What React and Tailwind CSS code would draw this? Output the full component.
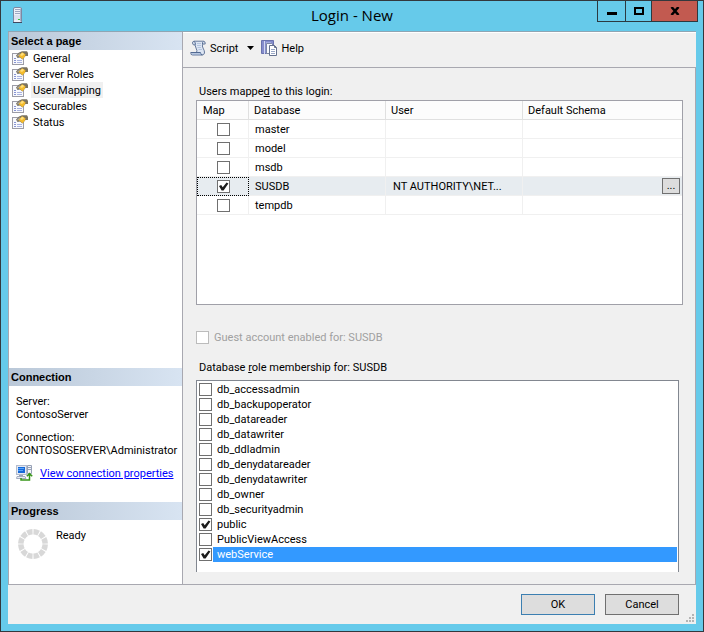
import React, { useState } from 'react';

const pages = ['General', 'Server Roles', 'User Mapping', 'Securables', 'Status'];

const databases = [
    { name: 'master' },
    { name: 'model' },
    { name: 'msdb' },
    { name: 'SUSDB', mapped: true, user: 'NT AUTHORITY\\NET...' },
    { name: 'tempdb' },
];

const roles = [
    'db_accessadmin',
    'db_backupoperator',
    'db_datareader',
    'db_datawriter',
    'db_ddladmin',
    'db_denydatareader',
    'db_denydatawriter',
    'db_owner',
    'db_securityadmin',
    'public',
    'PublicViewAccess',
    'webService',
];

function CheckBox({ muted, ...props }) {
    return (
        <span className="relative block size-[13px] shrink-0">
            <input
                type="checkbox"
                className={`peer block size-[13px] appearance-none border bg-white outline-none ${muted ? 'border-[#bcbcbc]' : 'border-[#707070]'}`}
                {...props}
            />
            <svg viewBox="0 0 13 13" className="pointer-events-none absolute inset-0 hidden size-[13px] peer-checked:block">
                <path d="M2 6 L4.2 5 L5.7 7.2 L9.6 2.6 L11.4 3.4 L6.6 10.4 H4.6 Z" fill="#1c1c1c" />
            </svg>
        </span>
    );
}

function ServerIcon() {
    return (
        <svg width="10" height="16" viewBox="0 0 10 16">
            <path d="M.5 2 Q.5 .5 2 .5 H7.5 Q8.5 .5 8.5 2 V14.5 Q8.5 15.5 7.5 15.5 H.5 Z" fill="#eef1f8" stroke="#7d88a2" />
            <path d="M7 1.5 H8 V14.5 H7 Z" fill="#a9b2ca" />
            <path d="M2 2.5 H7 M2 4.5 H7 M2 6.5 H7" stroke="#9ea8c2" />
            <rect x="1" y="8" width="6" height="5" fill="#dde2ef" />
            <rect x="5" y="12" width="2" height="1" fill="#3fbf3f" />
            <path d="M0 15.5 H9" stroke="#3f4961" />
        </svg>
    );
}

function PageIcon() {
    return (
        <svg width="16" height="14" viewBox="0 0 16 14" className="shrink-0">
            <rect x=".5" y="2.5" width="11" height="11" fill="#f8f9fd" stroke="#9c9ca6" />
            <path d="M2 7.5 H4 M2 9.5 H4 M2 11.5 H4" stroke="#8794d2" />
            <path d="M5 9.5 H10 M5 11.5 H10" stroke="#a9b3e0" />
            <path d="M4 4.5 L7 1.5 L10 .3 H15 L16 2 V5 L13.5 5 L10.5 8.5 L8 6.5 L5.5 7 Z" fill="#7a7361" />
            <path d="M6.5 5 L10 1.2 L13.5 3.2 L13 5.5 L10.5 8.2 L8.2 6.2 Z" fill="#f4bb2c" />
            <path d="M8 4 L10.2 1.8 L12.2 3 L10 5 Z" fill="#ffdf7d" />
            <path d="M5 5 L7.5 2.5 L8.5 2.5 L6 5.5 Z" fill="#b5b2aa" />
        </svg>
    );
}

function ScriptIcon() {
    return (
        <svg width="17" height="16" viewBox="0 0 17 16">
            <path d="M4 1.2 H13.5 Q15.5 1.3 15.2 4 H12.8 Q11.8 6 13 8 Q14.8 11 14.5 13 Q14 15 12 15 H2.5 Q.5 15 .8 12.5 H6.5 Q7.6 11 6 8 L5 5 Q2.5 5.3 2.5 3 Q2.5 1.4 4 1.2 Z" fill="#dce5f3" stroke="#66799b" />
            <path d="M4 1.5 Q6 2 5.2 5 M.8 12.5 H10.5 Q10.5 15 12.4 15 M13.5 1.5 Q12.3 2 12.5 4" fill="none" stroke="#526a92" />
            <path d="M7 3.5 H11 M7 5.5 H11 M7.5 7.5 H11 M8.5 9.5 H12" stroke="#b4c4de" />
            <path d="M2 14 H11" stroke="#90a7cb" />
        </svg>
    );
}

function HelpIcon() {
    return (
        <svg width="17" height="16" viewBox="0 0 17 16">
            <path d="M.5 .5 H12.5 V13.5 H.5 Z" fill="#858dcc" stroke="#6a72ae" />
            <path d="M3.5 1 V14" stroke="#d3d7f1" />
            <path d="M5 2 H10 V5 H5 Z" fill="#a4abdf" />
            <path d="M5.5 3.5 H10.5 L12.5 5.5 V13.5 H5.5 Z" fill="#f7f9ff" stroke="#7c87a4" />
            <path d="M8.5 5.5 H13.5 L15.5 7.5 V15.5 H8.5 Z" fill="#fff" stroke="#65718e" />
            <path d="M13.5 5.5 V7.5 H15.5" fill="none" stroke="#65718e" />
            <path d="M10 9.5 H14 M10 11.5 H14 M10 13.5 H14" stroke="#9aa8c6" />
        </svg>
    );
}

function ConnectionIcon() {
    return (
        <svg width="17" height="16" viewBox="0 0 17 16" className="shrink-0">
            <rect x=".5" y=".5" width="10" height="9" fill="#e4e9f3" stroke="#b4bccd" />
            <rect x="2" y="2" width="7" height="6" fill="#1668d8" />
            <path d="M2 3.5 H8 M2 5.5 H7" stroke="#57a4fa" />
            <path d="M3 10 H7 V11 H3 Z" fill="#9aa4b8" />
            <path d="M1 11.5 H9 L10 13.5 H.5 Z" fill="#e9ecf3" stroke="#a4adc0" />
            <path d="M11.5 .5 H15.5 V8.5 H11.5 Z" fill="#f4f6fa" stroke="#98a2b7" />
            <path d="M12 2.5 H15 M12 4.5 H15" stroke="#98a2b7" />
            <path d="M5 13 V15 H13.5 V10 M10.8 11.3 L13.5 8.5 L16.2 11.3" fill="none" stroke="#38961a" strokeWidth="1.5" />
        </svg>
    );
}

function ProgressRing() {
    return (
        <svg width="30" height="30" viewBox="0 0 30 30" className="shrink-0">
            <circle cx="15" cy="15" r="12.2" fill="none" stroke="#d8d8d8" strokeWidth="5.5" pathLength="120" strokeDasharray="8.4 1.6" strokeDashoffset="-0.8" />
        </svg>
    );
}

function PanelHeader({ children }) {
    return (
        <h2 className="h-[18px] bg-linear-to-r from-[#bac8d8] to-[#d8e4f2] pl-[2px] font-['Liberation_Sans',Arial,sans-serif] text-[11px] leading-[18px] font-bold">
            {children}
        </h2>
    );
}

function Sidebar({ page, onSelect }) {
    return (
        <aside className="flex w-[175px] shrink-0 flex-col border-x border-b border-[#a8a8b0] bg-white">
            <PanelHeader>Select a page</PanelHeader>
            <nav className="flex flex-1 flex-col">
                {pages.map((name) => (
                    <button key={name} type="button" onClick={() => onSelect(name)} className="flex h-4 items-center gap-[3px] pl-[3px]">
                        <PageIcon />
                        <span className={`px-[2px] pt-px leading-[15px] ${name === page ? 'bg-[#f0f0f0]' : ''}`}>{name}</span>
                    </button>
                ))}
            </nav>
            <PanelHeader>Connection</PanelHeader>
            <div className="h-[116px] pt-[9px] pl-[7px] leading-[13px] whitespace-nowrap">
                <p>Server:</p>
                <p>ContosoServer</p>
                <p className="mt-[10px]">Connection:</p>
                <p>CONTOSOSERVER\Administrator</p>
                <div className="mt-2 flex items-center gap-[7px]">
                    <ConnectionIcon />
                    <a href="#properties" className="text-[#0000ff] underline">View connection properties</a>
                </div>
            </div>
            <PanelHeader>Progress</PanelHeader>
            <div className="flex h-16 gap-2 pt-[9px] pl-[9px]">
                <ProgressRing />
                <span className="leading-[13px]">Ready</span>
            </div>
        </aside>
    );
}

function MappingTable({ mapped, onToggle }) {
    return (
        <div className="h-[205px] border border-[#a0a0a8] bg-white">
            <table className="w-full table-fixed border-separate border-spacing-0 text-left">
                <colgroup>
                    <col className="w-[52px]" />
                    <col className="w-[137px]" />
                    <col className="w-[137px]" />
                    <col />
                </colgroup>
                <thead>
                    <tr className="h-[19px] bg-[#fcfcfc]">
                        <th className="border-r border-b border-[#e0e0e0] pl-[6px] font-normal">Map</th>
                        <th className="border-r border-b border-[#e0e0e0] pl-[5px] font-normal">Database</th>
                        <th className="border-r border-b border-[#e0e0e0] pl-[5px] font-normal">User</th>
                        <th className="border-b border-[#e0e0e0] pl-[5px] font-normal">Default Schema</th>
                    </tr>
                </thead>
                <tbody>
                    {databases.map(({ name, user }) => {
                        const selected = name === 'SUSDB';
                        return (
                            <tr key={name} className={`h-[19px] ${selected ? 'bg-[#e7ecf0]' : ''}`}>
                                <td className={selected ? 'border border-dotted border-black' : 'border-r border-b border-[#f0f0f0] pl-px'}>
                                    <div className="flex justify-center">
                                        <CheckBox
                                            aria-label={`Map ${name}`}
                                            checked={mapped.includes(name)}
                                            onChange={() => onToggle(name)}
                                        />
                                    </div>
                                </td>
                                <td className="border-r border-b border-[#f0f0f0] pl-[6px]">{name}</td>
                                <td className="border-r border-b border-[#f0f0f0] pl-[7px]">{user}</td>
                                <td className="border-b border-[#f0f0f0] pr-[2px]">
                                    {selected && (
                                        <button type="button" aria-label="Browse schema" className="ml-auto block h-4 w-[18px] border border-[#707070] bg-[#dddddd] leading-[14px]">
                                            ...
                                        </button>
                                    )}
                                </td>
                            </tr>
                        );
                    })}
                </tbody>
            </table>
        </div>
    );
}

function RoleList({ checked, onToggle }) {
    return (
        <ul className="h-48 border-x border-t border-[#828790] bg-white px-[1px] pt-[1px]">
            {roles.map((role) => (
                <li key={role}>
                    <label className="flex h-[15px] items-center pl-[1px]">
                        <CheckBox checked={checked.includes(role)} onChange={() => onToggle(role)} />
                        <span className={`ml-px flex-1 pl-1 leading-[15px] ${role === 'webService' ? 'bg-[#3399ff] text-white' : ''}`}>
                            {role}
                        </span>
                    </label>
                </li>
            ))}
        </ul>
    );
}

function TitleBar() {
    return (
        <header className="relative flex h-[30px] shrink-0 items-center justify-center">
            <div className="absolute top-[6px] left-[5px]">
                <ServerIcon />
            </div>
            <h1 className="pb-[2px] font-['Open_Sans',sans-serif] text-[15px] leading-5">Login - New</h1>
            <div className="absolute top-0 -right-[2px] flex h-[21px] divide-x divide-[#2b3940] border-x border-b border-[#2b3940]">
                <button type="button" aria-label="Minimize" className="flex w-7 items-center justify-center">
                    <svg width="10" height="8"><rect y="5" width="10" height="3" /></svg>
                </button>
                <button type="button" aria-label="Maximize" className="flex w-[26px] items-center justify-center">
                    <svg width="10" height="8"><path d="M1 1 H9 V7 H1 Z" fill="none" stroke="#000" strokeWidth="2" /></svg>
                </button>
                <button type="button" aria-label="Close" className="flex w-[45px] items-center justify-center bg-[#c25a50]">
                    <svg width="10" height="8"><path d="M1.5 0 L8.5 8 M8.5 0 L1.5 8" stroke="#000" strokeWidth="2.5" /></svg>
                </button>
            </div>
        </header>
    );
}

const toggle = (list, item) => (list.includes(item) ? list.filter((i) => i !== item) : [...list, item]);

export default function App() {
    const [page, setPage] = useState('User Mapping');
    const [mapped, setMapped] = useState(databases.filter((d) => d.mapped).map((d) => d.name));
    const [checked, setChecked] = useState(['public', 'webService']);

    return (
        <div className="flex min-h-screen flex-col border border-[#33383d] bg-[#66caea] px-[7px] pb-[7px] font-[Roboto,'Liberation_Sans',sans-serif] text-[11px] leading-[13px] text-black">
            <TitleBar />
            <div className="flex flex-1 flex-col border-t border-[#8fa5b3] bg-[#f0f0f0]">
                <div className="flex flex-1">
                    <Sidebar page={page} onSelect={setPage} />
                    <main className="flex min-w-0 flex-1 flex-col border-t border-white">
                        <div className="flex h-[34px] items-center pb-1 pl-[7px]">
                            <button type="button" className="flex items-center gap-[3px]">
                                <ScriptIcon />
                                Script
                            </button>
                            <button type="button" aria-label="Script options" className="pr-[7px] pl-[9px]">
                                <svg width="7" height="4"><path d="M0 0 H7 L3.5 4 Z" /></svg>
                            </button>
                            <button type="button" className="flex items-center gap-[3px]">
                                <HelpIcon />
                                Help
                            </button>
                        </div>
                        <section className="flex-1 border-y border-r border-[#a8a8b0] pr-3 pl-[13px]">
                            <p className="mt-[17px] mb-[2px] pl-[3px]">Users mappe<u>d</u> to this login:</p>
                            <MappingTable mapped={mapped} onToggle={(name) => setMapped(toggle(mapped, name))} />
                            <label className="mt-[26px] flex items-center gap-[5px] text-[#a0a0a0]">
                                <CheckBox muted disabled />
                                Guest account enabled for: SUSDB
                            </label>
                            <div className="mt-[17px] pr-1">
                                <p className="mb-[6px] pl-[3px]">Database <u>r</u>ole membership for: SUSDB</p>
                                <RoleList checked={checked} onToggle={(role) => setChecked(toggle(checked, role))} />
                            </div>
                        </section>
                    </main>
                </div>
                <footer className="relative flex h-[39px] items-start justify-end gap-[10px] pt-[9px] pr-[17px]">
                    <button type="button" className="h-[21px] w-[74px] border border-[#3c7fb1] bg-[#dddddd]">OK</button>
                    <button type="button" className="h-[21px] w-[74px] border border-[#707070] bg-[#dddddd]">Cancel</button>
                    <svg width="8" height="8" className="absolute right-[2px] bottom-[2px]" fill="#b4b4b4">
                        <path d="M6 0 h2 v2 h-2 Z M3 3 h2 v2 h-2 Z M6 3 h2 v2 h-2 Z M0 6 h2 v2 h-2 Z M3 6 h2 v2 h-2 Z M6 6 h2 v2 h-2 Z" />
                    </svg>
                </footer>
            </div>
        </div>
    );
}
